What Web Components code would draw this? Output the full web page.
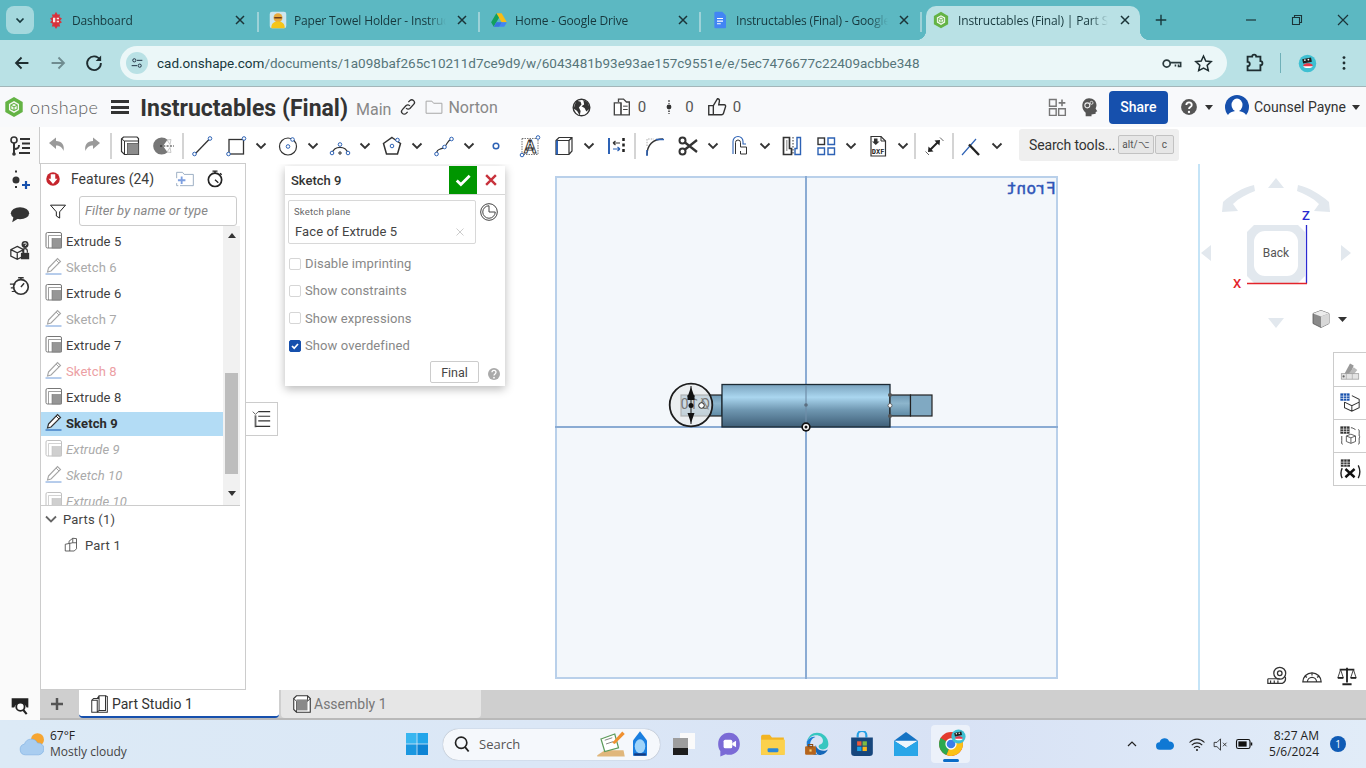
<!DOCTYPE html>
<html>
<head>
<meta charset="utf-8">
<title>Instructables (Final)</title>
<style>
  html, body { margin: 0; padding: 0; height: 768px; overflow: hidden; background: #fff; font-family: Roboto, "Liberation Sans", sans-serif; }
</style>
</head>
<body>
<app-shell></app-shell>
<script>
const BLUE = '#2d62b5';
const ring = (x, y, r = 1.8) => `<circle cx="${x}" cy="${y}" r="${r}" fill="#fff" stroke="${BLUE}" stroke-width="1"/>`;
const avatarFace = `<circle cx="12" cy="12" r="10" fill="#3fc0d2"/><path d="M6 7l10-2 1 5-10 2z" fill="#222"/><circle cx="9" cy="8" r="1" fill="#fff"/><circle cx="13" cy="7.5" r="1" fill="#fff"/><path d="M7 14c2-3 9-3 11 0 0 3-11 3-11 0z" fill="#e8384a"/><path d="M7 15h11c-1 3-10 3-11 0z" fill="#fff"/>`;

const ICONS = {
  // browser
  dashboard: `<path d="M12 1l2 3.500h3.500l-1 3.500 3.500 2-2.500 2.500L20 15l-3.500 2 1 3.500H14L12 24l-2-3.500H6.500l1-3.500L4 15l2.500-2.500L4 10l3.500-2-1-3.500H10z" fill="#d8323c"/><path d="M8 9h3v6H8zM13 9h3v2h-3zM13 13h3v2h-3z" fill="#fbe6e6"/>`,
  towel: `<rect x="1" y="1" width="22" height="22" rx="3" fill="#cfe6ee"/><circle cx="12" cy="9" r="6" fill="#e8a93c"/><path d="M7 8h10v2H7z" fill="#6b3d1c"/><path d="M3 23c0-7 4-9 9-9s9 2 9 9z" fill="#f5c518"/>`,
  drive: `<path d="M8.500 3h7l7 12h-7z" fill="#f9bc15"/><path d="M8.500 3L1.500 15l3.500 6 7-12z" fill="#12a05c"/><path d="M5 21h14l3.500-6h-14z" fill="#4285f4"/><path d="M15.500 15H8.500L5 21h7z" fill="#2b63c9" opacity=".5"/>`,
  docs: `<path d="M6 1h9l5 5v15.500a1.500 1.500 0 0 1-1.500 1.500h-12.500A1.500 1.500 0 0 1 4.500 21.500V2.500A1.500 1.500 0 0 1 6 1z" fill="#4285f4"/><path d="M8 10h8M8 13.500h8M8 17h5" stroke="#fff" stroke-width="1.600"/>`,
  hex: `<path d="M12 1l9.500 5.500v11L12 23l-9.500-5.500v-11z" fill="#64b345"/><path d="M12 5.500l5.500 3.200v6.600L12 18.500l-5.500-3.200V8.700z" fill="#f4f8f1"/><path d="M12 8l3.500 2v4L12 16l-3.500-2v-4zM12 12v4M8.500 10l3.500 2 3.500-2" fill="none" stroke="#64b345" stroke-width="1.100"/>`,
  back: `<path d="M19 12H6M11.500 6L5.500 12l6 6" fill="none" stroke="#1e2d30" stroke-width="2"/>`,
  forward: `<path d="M5 12h13M12.500 6l6 6-6 6" fill="none" stroke="#6f8c90" stroke-width="2"/>`,
  reload: `<path d="M18.500 8.500A7.500 7.500 0 1 0 19.500 12" fill="none" stroke="#1e2d30" stroke-width="2"/><path d="M19.800 3.800v6h-6z" fill="#1e2d30"/>`,
  tune: `<circle cx="8" cy="8" r="2.400" fill="none" stroke="#234" stroke-width="1.500"/><path d="M12 8h8M4 16h8" stroke="#234" stroke-width="1.500"/><circle cx="16" cy="16" r="2.400" fill="none" stroke="#234" stroke-width="1.500"/>`,
  key: `<circle cx="6.500" cy="12" r="4" fill="none" stroke="#2b3b3e" stroke-width="2"/><path d="M10.500 11h12v4.500h-2.500V13M16.500 13v2.500" fill="none" stroke="#2b3b3e" stroke-width="1.800"/>`,
  star: `<path d="M12 3.500l2.600 5.700 6.200.7-4.600 4.200 1.300 6.100L12 17.200l-5.500 3 1.300-6.100L3.200 9.900l6.200-.7z" fill="none" stroke="#1e2d30" stroke-width="1.700"/>`,
  puzzle: `<path d="M5 5h5a2.200 2.200 0 0 1 4.400 0H19v5a2.200 2.200 0 0 1 0 4.400V20H5v-4.500a2.400 2.400 0 0 0 0-4.800z" fill="none" stroke="#1e2d30" stroke-width="2"/>`,
  avatar: avatarFace,
  kebab: `<circle cx="12" cy="5.500" r="1.700" fill="#1e2d30"/><circle cx="12" cy="12" r="1.700" fill="#1e2d30"/><circle cx="12" cy="18.500" r="1.700" fill="#1e2d30"/>`,
  // doc bar
  link: `<path d="M9.500 13.500a3.500 3.500 0 0 0 5 .5l5-5.500a3.500 3.500 0 0 0-5-5l-2 2M14.500 10.500a3.500 3.500 0 0 0-5-.5l-5 5.500a3.500 3.500 0 0 0 5 5l2-2" fill="none" stroke="#333" stroke-width="1.800"/>`,
  folder: `<path d="M2.500 5h7l2 2.500h10V19.500H2.500z" fill="none" stroke="#a8a8a8" stroke-width="1.200"/>`,
  globe: `<circle cx="12" cy="12" r="9.500" fill="#fff" stroke="#333" stroke-width="1.600"/><path d="M6 4l5 1.500 1 3-3 3.500 2 4-1 5-3-5-4-3zM14 3l5 3 2.500 7-4 3.500-2-4-3.500-2 3-2z" fill="#333"/>`,
  copies: `<path d="M9 6V2.500h6l3.500 3.500H22v15.500H12M4 7h8v14.500H4z" fill="#fff" stroke="#444" stroke-width="1.600"/><path d="M12 7l0 14.500M14.500 11h5.500M14.500 15h5.500" stroke="#444" stroke-width="1.200"/>`,
  branchdot: `<circle cx="12" cy="12" r="3.200" fill="#333"/><path d="M12 3v4.500M12 16.500V21" stroke="#333" stroke-width="2" stroke-dasharray="2 1.500"/>`,
  thumb: `<path d="M8 10.500l4.500-7.500c2 0 2.500 1.500 2 3.500l-.6 3h6c1.200 0 1.800 1 1.400 2.200l-2.300 7.400c-.3.900-1 1.400-2 1.400H8zM8 10.500H3v10h5" fill="none" stroke="#333" stroke-width="1.500"/>`,
  grid4: `<path d="M3 3h8v8H3zM3 14h8v8H3zM14 14h8v8h-8z" fill="none" stroke="#777" stroke-width="1.700"/><path d="M18 3v8M14 7h8" stroke="#777" stroke-width="1.900"/>`,
  head: `<path d="M12 1.500c5.500 0 9 3.500 9 8.500 0 2-1 3-1 4l2 3-2 1v2l-5 1V23H8v-4c-2-2-4-4-4-8.500C4 5.500 7.500 1.500 12 1.500z" fill="#555"/><circle cx="10" cy="10" r="3" fill="none" stroke="#eee" stroke-width="1.300"/><circle cx="15" cy="7" r="1.800" fill="none" stroke="#eee" stroke-width="1"/>`,
  help: `<circle cx="12" cy="12" r="9.500" fill="#555"/><path d="M8.800 9.500c0-4.200 6.500-4.200 6.500 0 0 2.700-3.300 2.500-3.300 5" fill="none" stroke="#fff" stroke-width="2.200"/><circle cx="12" cy="18" r="1.400" fill="#fff"/>`,
  user: `<circle cx="12" cy="12" r="12" fill="#1650ad"/><ellipse cx="12" cy="10" rx="5.500" ry="6.500" fill="#fff"/><path d="M2 24c0-6 5-8 10-8s10 2 10 8z" fill="#fff"/>`,
  // toolbar
  tree: `<circle cx="6" cy="6" r="3" fill="none" stroke="#333" stroke-width="1.600"/><path d="M6 9v11M6 15c4 0 5-1 5-4" fill="none" stroke="#333" stroke-width="2"/><circle cx="6" cy="20" r="1.800" fill="#333"/><path d="M12 5h10M14 9.500h8M14 14h8M11 19h11" stroke="#333" stroke-width="2"/>`,
  undo: `<path d="M4 9l7-5.500V7c5.500 0 9 4 7.500 10-1.500-4-4-5.500-7.500-5.500V15z" fill="#9a9a9a"/>`,
  redo: `<path d="M20 9l-7-5.500V7C7.500 7 4 11 5.500 17c1.500-4 4-5.500 7.500-5.500V15z" fill="#9a9a9a"/>`,
  extrude: `<path d="M3.500 5l2-2H19l1.500 1.500v16H6.500l-3-3z" fill="#fff" stroke="#333" stroke-width="1.200"/><path d="M6.500 7v13.500M3.500 5l3 2h14" fill="none" stroke="#333" stroke-width="1"/><rect x="9.500" y="9.500" width="11" height="11" fill="#8c8c8c" stroke="#555" stroke-width=".8"/>`,
  revolve: `<path d="M15.500 5.800A8.500 8.500 0 1 0 15.500 18.200L11 12z" fill="#777"/><path d="M15 6l4-.5-1 5zM15 18l4 .5-1-5z" fill="none" stroke="#bbb" stroke-width=".8"/><path d="M8 12h14" stroke="#222" stroke-width="1" stroke-dasharray="2 1.300"/>`,
  line: `<path d="M5.500 19.500L19 5.500" stroke="#333" stroke-width="1.300"/>${ring(4.5, 20)}${ring(20, 4.5)}`,
  rect: `<rect x="5" y="5.500" width="14.500" height="14.500" fill="none" stroke="#333" stroke-width="1.300"/>${ring(20, 4.5)}${ring(4.5, 20)}`,
  circle: `<circle cx="12" cy="12.500" r="8.500" fill="none" stroke="#333" stroke-width="1.200"/>${ring(12, 12.5)}${ring(16.5, 5.5)}`,
  arc: `<path d="M4 19A8.500 8.500 0 0 1 20 19" fill="none" stroke="#333" stroke-width="1.200"/>${ring(4, 19)}${ring(20, 19)}${ring(12, 10.5)}<path d="M12 17v4M10 19h4" stroke="#333" stroke-width="1"/>`,
  polygon: `<path d="M12 3.500l8.500 6-3 10.500h-11L3.500 9.500z" fill="none" stroke="#333" stroke-width="1.500"/>${ring(12, 12)}${ring(17.5, 6)}`,
  spline: `<path d="M4.500 20c0-6 5-4 8-7s2.500-6 7-8" fill="none" stroke="#333" stroke-width="1.200"/>${ring(4.5, 20)}${ring(12.5, 13)}${ring(19.5, 5)}`,
  point: `<circle cx="12" cy="12" r="2.800" fill="#fff" stroke="${BLUE}" stroke-width="1.500"/>`,
  textTool: `<rect x="4" y="4.500" width="16" height="16" fill="none" stroke="#555" stroke-width=".8" stroke-dasharray="1.500 1"/><text x="12" y="19" text-anchor="middle" font-family="Roboto, sans-serif" font-size="18" font-weight="700" fill="#fff" stroke="#333" stroke-width=".9">A</text>${ring(20, 3.5)}${ring(4, 21)}`,
  plane: `<path d="M4 6.500l3-3h13V17l-3 3.500H4zM4 6.500h13v14M17 6.500l3-3" fill="none" stroke="#333" stroke-width="1.200"/><rect x="4" y="6.500" width="2" height="14" fill="${BLUE}"/>`,
  dim: `<path d="M5 4v16" stroke="${BLUE}" stroke-width="2"/><path d="M19.500 4v16" stroke="#222" stroke-width="2.500" stroke-dasharray="3 2.500"/><path d="M9 9h7M9 9l2.500-2M9 9l2.500 2" fill="none" stroke="#333" stroke-width="1.200"/><path d="M9 15h7M16 15l-2.500-2M16 15l-2.500 2" fill="none" stroke="${BLUE}" stroke-width="1.200"/>`,
  fillet: `<path d="M5 21C5 11 11 5 21 5" fill="none" stroke="#333" stroke-width="1.500"/><path d="M5 16v6M14 5.500h8" stroke="${BLUE}" stroke-width="1.500"/><path d="M5 12V5h7" fill="none" stroke="#aaa" stroke-width="1" stroke-dasharray="1.500 1.200"/>`,
  scissors: `<circle cx="6.500" cy="6.500" r="3" fill="none" stroke="#333" stroke-width="2"/><circle cx="6.500" cy="17.500" r="3" fill="none" stroke="#333" stroke-width="2"/><path d="M9 8.500L21 18M9 15.500L21 6" stroke="#333" stroke-width="2.300"/>`,
  offset: `<path d="M7.500 20V8.500a2.500 2.500 0 0 1 5 0V13h6v7h-6v-3" fill="none" stroke="#333" stroke-width="1"/><path d="M5 20V7.500a5 5 0 0 1 10 0V10h3" fill="none" stroke="${BLUE}" stroke-width="1.100"/>`,
  mirror: `<path d="M3.500 3.500h6v11h2v6h-8z" fill="#fff" stroke="#333" stroke-width="1.700"/><rect x="6" y="6" width="1.500" height="11" fill="#aaa"/><path d="M20.500 3.500v17h-5.500v-6h2v-11z" fill="none" stroke="${BLUE}" stroke-width="1.400"/><path d="M13 3v18" stroke="#333" stroke-width="1" stroke-dasharray="1.500 1.500"/>`,
  pattern: `<rect x="4" y="4" width="6.500" height="6.500" fill="none" stroke="#333" stroke-width="1.400"/><path d="M14 4h6.500v6.500H14zM4 14h6.500v6.500H4zM14 14h6.500v6.500H14z" fill="none" stroke="${BLUE}" stroke-width="1.400"/>`,
  dxf: `<path d="M5 2.500h10l4.500 4.500v15H5z" fill="#fff" stroke="#333" stroke-width="1.200"/><path d="M15 2.500V7h4.500" fill="none" stroke="#333" stroke-width="1"/><path d="M8 4.500h3.500v3h2L9.800 11 6 7.500h2z" fill="#333"/><text x="12.200" y="19.500" text-anchor="middle" font-family="'DejaVu Sans Mono', monospace" font-size="7" font-weight="700" fill="#222">DXF</text>`,
  transform: `<path d="M7.500 16.500L16 8" stroke="#222" stroke-width="2"/><path d="M12.500 6.500l5.500-.5-.5 5.500zM6.500 12.500L6 18l5.500-.5z" fill="#222"/><path d="M18 3.500l3.500 3.500M3.500 17.500L7 21" stroke="#555" stroke-width=".9"/>`,
  tangent: `<path d="M2 21L16 5" stroke="${BLUE}" stroke-width="1.200"/><path d="M9 10.500l10 10.500" stroke="#222" stroke-width="2.400"/>`,
  // left rail
  railAdd: `<path d="M8 2.500v3.500M8 18v3.500" stroke="#333" stroke-width="2" stroke-dasharray="2 1.500"/><circle cx="8" cy="12" r="3.500" fill="#333"/><path d="M18 13v8M14 17h8" stroke="#1650ad" stroke-width="2.200"/>`,
  comment: `<ellipse cx="12" cy="10" rx="10" ry="6.500" fill="#333"/><path d="M5 14l-1.500 6 7-4.500z" fill="#333"/>`,
  access: `<path d="M9 9l7 3.500v7L9 23l-7-3.500v-7zM2 12.500L9 16l7-3.500M9 16v7" fill="none" stroke="#333" stroke-width="1.400" transform="translate(0 -2)"/><rect x="13" y="14" width="9" height="7" fill="#333"/><path d="M15 14v-2a2.500 2.500 0 0 1 5 0v2" fill="none" stroke="#333" stroke-width="1.300"/><circle cx="17.500" cy="5" r="3.800" fill="#333"/><path d="M16 4.500c0-1.800 3-1.800 3 0 0 1-1.500 1-1.500 2" fill="none" stroke="#fff" stroke-width="1"/>`,
  perf: `<circle cx="13" cy="13" r="8" fill="#fff" stroke="#333" stroke-width="1.800"/><path d="M10 3h6M13 3v2M13 13l3.500-4" fill="none" stroke="#333" stroke-width="1.600"/><path d="M1 10h6M2 14h4M3 18h4" stroke="#333" stroke-width="1.300"/>`,
  inspect: `<path d="M2 4h20v11h-2a8 8 0 0 0-15 0H2z" fill="#222"/><circle cx="12.500" cy="14" r="5" fill="#fff" stroke="#222" stroke-width="2.200"/><path d="M16 18l4 5" stroke="#222" stroke-width="2.500"/>`,
  // feature panel
  rollback: `<circle cx="12" cy="12" r="9" fill="#c6252d"/><path d="M9 5.500h6v6h3l-6 7-6-7h3z" fill="#fff"/>`,
  folderAdd: `<path d="M2 4h7l2 2.500h11V20H6" fill="none" stroke="#8aa0b8" stroke-width="1"/><path d="M2 4v7M2 17v3h2" fill="none" stroke="#8aa0b8" stroke-width="1"/><path d="M8 9v9M3.500 13.500h9" stroke="#7d9fe0" stroke-width="2.200"/>`,
  stopwatch: `<circle cx="12" cy="13" r="8" fill="#fff" stroke="#222" stroke-width="2"/><path d="M9 2.500h6M12 2.500v2.500M12 13l4 3.500M18 5l2 2" fill="none" stroke="#222" stroke-width="1.600"/>`,
  funnel: `<path d="M3 5h18l-7 8v7.500l-4-2.500v-5z" fill="#fff" stroke="#222" stroke-width="1.200"/>`,
  extrudeRow: `<rect x="3" y="3.500" width="15.500" height="15.500" rx="1.500" fill="#fff" stroke="#777" stroke-width="1"/><path d="M5.500 6.500V19M5.500 6.500h13" fill="none" stroke="#777" stroke-width=".7"/><rect x="9" y="9.500" width="9.500" height="9.500" fill="#969696" stroke="#777" stroke-width=".6"/>`,
  extrudeOff: `<g opacity=".45"><rect x="3" y="3.500" width="15.500" height="15.500" rx="1.500" fill="#fff" stroke="#777" stroke-width="1"/><path d="M5.500 6.500V19M5.500 6.500h13" fill="none" stroke="#777" stroke-width=".7"/><rect x="9" y="9.500" width="9.500" height="9.500" fill="#969696" stroke="#777" stroke-width=".6"/></g>`,
  sketchRow: `<path d="M2.500 19h16" stroke="#6f9ad8" stroke-width="1"/><path d="M5.500 13L14.500 3.500l3 3-9.500 9.500-3.500 1z" fill="#fff" stroke="#a5a5a5" stroke-width="1.100"/><path d="M13 5l3 3" stroke="#a5a5a5" stroke-width="1"/>`,
  sketchOn: `<path d="M2.500 19h16" stroke="#1b5fb5" stroke-width="1.100"/><path d="M5.500 13L14.500 3.500l3 3-9.500 9.500-3.500 1z" fill="#fff" stroke="#333" stroke-width="1.200"/><path d="M13 5l3 3" stroke="#333" stroke-width="1"/>`,
  part: `<path d="M3 11l5-1V7l5-4 5 .5V17l-3 3H3zM13 3v6l-5 1M13 9h5M9 10v10" fill="none" stroke="#444" stroke-width="1.100"/>`,
  list: `<path d="M3 4l3 3 3-3" fill="none" stroke="#555" stroke-width="1"/><path d="M6 8v13" stroke="#666" stroke-width="2"/><path d="M9 4h13M9 9h13M9 14h13M6 20h16" stroke="#333" stroke-width="1.300"/>`,
  // dialog
  check: `<path d="M4.500 12.500l5 5L20 7" fill="none" stroke="#fff" stroke-width="3.300"/>`,
  cross: `<path d="M5.500 5.500l13 13M18.500 5.500l-13 13" stroke="#c8323c" stroke-width="3.200"/>`,
  clock: `<circle cx="12" cy="12" r="10" fill="none" stroke="#444" stroke-width="1.200"/><path d="M12 4.500a7.500 7.500 0 1 0 7.500 7.500H12z" fill="none" stroke="#444" stroke-width="1.200"/>`,
  helpGray: `<circle cx="12" cy="12" r="9" fill="#aaa"/><path d="M9 9.500c0-4 6-4 6 0 0 2.500-3 2.300-3 4.800" fill="none" stroke="#fff" stroke-width="2"/><circle cx="12" cy="17.500" r="1.300" fill="#fff"/>`,
  // view side buttons
  appearance: `<path d="M5 18l7-13 4 2-4 11z" fill="#999"/><path d="M9 18l7-9 4 3-5 6z" fill="#bbb"/><rect x="2.500" y="16" width="19" height="6" fill="#e4e4e4" stroke="#999" stroke-width=".8"/><path d="M8 16v6M14.500 16v6" stroke="#aaa" stroke-width=".8"/><circle cx="5" cy="19" r="1.200" fill="#666"/>`,
  tableBlue: `<rect x="1.500" y="1.500" width="10" height="8" fill="#1650ad"/><path d="M1.500 4.500h10M1.500 7h10M5 1.500v8M8.300 1.500v8" stroke="#fff" stroke-width=".7"/><path d="M14 5l8 4v9l-8 4-8-4v-6M6 12l8 4 8-4M14 16v6" fill="none" stroke="#333" stroke-width="1.100" transform="translate(0 -1)"/>`,
  tableCfg: `<rect x="1.500" y="1.500" width="10" height="8" fill="#333"/><path d="M1.500 4.500h10M1.500 7h10M5 1.500v8M8.300 1.500v8" stroke="#fff" stroke-width=".7"/><path d="M13 3c2 0 2 .5 5 2M21 5c1.500 0 1 2 1 4v3l1 1-1 1v3c0 2 .5 4-1 4M3 12v5c0 2-.5 4 1 4" fill="none" stroke="#444" stroke-width="1"/><path d="M8 12l5-2 5 2v6l-5 2-5-2zM13 14v6M8 12l5 2 5-2" fill="none" stroke="#555" stroke-width="1"/>`,
  tableFx: `<rect x="2" y="1.500" width="10" height="8" fill="#333"/><path d="M2 4.500h10M2 7h10M5.300 1.500v8M8.700 1.500v8" stroke="#fff" stroke-width=".7"/><path d="M3.500 11c-1.500 3-1.500 8 0 11M21 8c2 4 2 10 0 14" fill="none" stroke="#222" stroke-width="1.500"/><path d="M7 12l10 9M17 12L7 21" stroke="#111" stroke-width="2.600"/>`,
  tape: `<circle cx="15" cy="9" r="6.500" fill="#fff" stroke="#333" stroke-width="1.400"/><circle cx="15" cy="9" r="2.500" fill="none" stroke="#333" stroke-width="1.400"/><path d="M2 15h13M2 15v5h16a6 6 0 0 0 3-7M5 17v3M9 17v3M13 17v3" fill="none" stroke="#333" stroke-width="1.300"/>`,
  protractor: `<path d="M2 18.500a10 10 0 0 1 20 0z" fill="#fff" stroke="#333" stroke-width="1.400"/><path d="M7 18.500a5 5 0 0 1 10 0M4 12l2.500 1.500M20 12l-2.500 1.500M12 8.500v3" fill="none" stroke="#333" stroke-width="1.300"/>`,
  scale: `<path d="M12 3v16M4 5h16M7 21h10" stroke="#222" stroke-width="2"/><path d="M2 14l3-9 3 9zM16 14l3-9 3 9z" fill="none" stroke="#333" stroke-width="1"/><path d="M2 14h6M16 14h6" stroke="#222" stroke-width="2"/>`,
  // tabs
  studioTab: `<path d="M3 8h6v13H3zM3 8l2-2h6M9 21l2-2M11 3h7v16h-7zM11 3l-2 3M11 6v13" fill="none" stroke="#333" stroke-width="1.100"/><path d="M18 3l2 1v17h-9l-2 0" fill="none" stroke="#333" stroke-width="1.100"/>`,
  assemblyTab: `<path d="M3 6l3-3h12l3 3v15H6l-3-3z" fill="#fff" stroke="#333" stroke-width="1.200"/><path d="M3 6l3 3h12V3M6 9v12M18 9l3-3" fill="none" stroke="#333" stroke-width="1"/><rect x="6" y="7" width="12" height="12" fill="#8a8a8a"/>`,
  plus: `<path d="M12 4v16M4 12h16" stroke="#555" stroke-width="3.300"/>`,
  plusDark: `<path d="M12 3v18M3 12h18" stroke="#17383d" stroke-width="2.400"/>`,
  // taskbar
  weather: `<circle cx="18" cy="8" r="6" fill="#f6a531"/><path d="M7 22a5 5 0 0 1-1-9.900A6.500 6.500 0 0 1 18 11a5.500 5.500 0 0 1 1 11z" fill="#a9cdf0" stroke="#7fb0e2" stroke-width=".6"/>`,
  win: `<path d="M1 1h10.600v10.600H1z" fill="#38b6f0"/><path d="M12.400 1H23v10.600H12.400z" fill="#22a5ea"/><path d="M1 12.400h10.600V23H1z" fill="#1a97e0"/><path d="M12.400 12.400H23V23H12.400z" fill="#0d83d4"/>`,
  search: `<circle cx="11" cy="10.500" r="6.800" fill="none" stroke="#222" stroke-width="2"/><path d="M15.500 15.500l4.500 5.500" stroke="#222" stroke-width="2.200"/>`,
  taskview: `<rect x="8" y="1" width="15" height="16" fill="#fafafa"/><rect x="1" y="6" width="15" height="10" fill="#9d9d9d"/><rect x="1" y="16" width="15" height="7" fill="#1d1d1d"/>`,
  meet: `<path d="M12 1.500c6 0 10 4.500 10 10.500S18 22 12 22c-1 0-2 0-3-.5L4 23.500v-5C2.500 16.500 2 14.500 2 12 2 6 6 1.500 12 1.500z" fill="#7b6bd6"/><rect x="7" y="8" width="8" height="8" rx="1.500" fill="#fff"/><path d="M15 11l3.500-2v6L15 13z" fill="#fff"/>`,
  explorer: `<path d="M1 5a1.500 1.500 0 0 1 1.500-1.500H9L11 6h11v16H1z" fill="#f2b423"/><path d="M1 8h22v14H1z" fill="#fcd14d"/><rect x="7" y="16" width="10" height="3.500" rx="1" fill="#2b88d8"/>`,
  edge: `<path d="M12 1.500C18 1.500 22.500 6 22.500 12c0 3-2 5-5 5-2 0-4-1-4-2.500 0-3 4-1.500 4-5.500 0-3-3-5-6-5-4 0-7 2.500-9 6C4 4.500 7.500 1.500 12 1.500z" fill="#37c6c0"/><path d="M2.500 10c2-3.500 5-5 8-4.500C6.500 7 5 10.500 6 15c.8 3.500 3.500 6 7 7-6 1-11-3.500-10.500-12z" fill="#1f7fd6"/><path d="M13 22c4 .5 7.500-1.500 9-5-2 1.500-5 1.500-7.500.5-2-1-3.500-2.500-3.500-4.500-1.500 4 .5 8 2 9z" fill="#1567b8"/><rect x="1" y="14" width="10" height="8" rx="1" fill="#b5651d"/><rect x="4" y="12.500" width="4" height="2" fill="none" stroke="#8a4a12"/><rect x="5" y="17" width="2" height="2" fill="#f5d27a"/>`,
  store: `<path d="M8 6V4a4 4 0 0 1 8 0v2" fill="none" stroke="#24a0e6" stroke-width="2"/><path d="M2 6h20v14a3 3 0 0 1-3 3H5a3 3 0 0 1-3-3z" fill="#17467c"/><rect x="7.500" y="9.500" width="4" height="4" fill="#ee5a3a"/><rect x="12.500" y="9.500" width="4" height="4" fill="#7dbb42"/><rect x="7.500" y="14.500" width="4" height="4" fill="#1aa3ea"/><rect x="12.500" y="14.500" width="4" height="4" fill="#fab81b"/>`,
  mail: `<path d="M1 9l11-8 11 8v14H1z" fill="#1573c4"/><path d="M1 9h22L12 16z" fill="#eef6fc"/><path d="M1 9l11 7 11-7v14H1z" fill="#29a6e8"/>`,
  chrome: `<circle cx="12" cy="12" r="11" fill="#e33b2e"/><path d="M12 12L2.400 6.500a11 11 0 0 0 5.500 15.700z" fill="#2da94f"/><path d="M12 12l-4.100 10.200A11 11 0 0 0 22.800 10L12 7z" fill="#fbc116"/><path d="M7 7h16v3H12z" fill="#e33b2e"/><circle cx="12" cy="12" r="5.200" fill="#fff"/><circle cx="12" cy="12" r="4" fill="#3b7de8"/>`,
  chevUp: `<path d="M6 15l6-6 6 6" fill="none" stroke="#222" stroke-width="1.800"/>`,
  cloud: `<path d="M6 19a4.500 4.500 0 0 1-.5-9A6 6 0 0 1 17 9a5 5 0 0 1 1.500 10z" fill="#0f78d4"/>`,
  wifi: `<path d="M2 10c6-6 14-6 20 0M5 13.500c4-4 10-4 14 0M8 17c2.500-2.300 5.500-2.300 8 0" fill="none" stroke="#222" stroke-width="1.400"/><circle cx="12" cy="20" r="1.400" fill="#222"/>`,
  volume: `<path d="M3 9h4l5-5v16l-5-5H3z" fill="none" stroke="#222" stroke-width="1.200"/><path d="M15.500 9.500l5 5M20.500 9.500l-5 5" stroke="#222" stroke-width="1.200"/>`,
  battery: `<rect x="2" y="6" width="18" height="12" rx="2.500" fill="none" stroke="#111" stroke-width="1.500"/><rect x="4.500" y="8.500" width="11" height="7" fill="#111"/><rect x="21" y="10" width="2" height="4" fill="#111"/>`,
  pencilBook: `<path d="M1 21l6-4h15l1 5H1z" fill="#e0b77c"/><path d="M4 8l11-4 3 11-11 3z" fill="#fff" stroke="#5c9a5a" stroke-width="1"/><path d="M7 9l6-2M8 12l6-2" stroke="#888" stroke-width=".8"/><path d="M13 11l8-9 2 2-8 8z" fill="#f09030"/>`,
  pencilBlue: `<path d="M12 1l6 8v13H6V9z" fill="#1a7fe0"/><ellipse cx="12" cy="14" rx="4.500" ry="6" fill="#9fd4fa"/><rect x="7" y="20" width="10" height="2" fill="#123a80"/>`
};

class XIcon extends HTMLElement {
  constructor() {
    super();
    const size = this.getAttribute('size') || 24;
    this.attachShadow({ mode: 'open' }).innerHTML = `
      <style>:host { display: inline-flex; flex: none; width: ${size}px; height: ${size}px; } svg { display: block; }</style>
      <svg width="${size}" height="${size}" viewBox="0 0 24 24">${ICONS[this.getAttribute('name')] || ''}</svg>`;
  }
}
customElements.define('x-icon', XIcon);

class ChromeTab extends HTMLElement {
  constructor() {
    super();
    const active = this.hasAttribute('active');
    const pad = this.getAttribute('pad') || (active ? 6 : 10);
    this.attachShadow({ mode: 'open' }).innerHTML = `
      <style>
        :host { display: block; flex: none; width: 221px; height: 34px; position: relative; color: #17383d; }
        .in { display: flex; align-items: center; height: 34px; padding: 0 0 6px ${pad}px; border-radius: 10px 10px 0 0; background: ${active ? '#b9e1e5' : 'transparent'}; box-sizing: border-box; width: ${active ? 214 : 221}px; margin-left: ${active ? 4 : 0}px; position: relative; }
        .title { font: 12px "Open Sans", sans-serif; letter-spacing: -.15px; margin-left: ${active ? 8 : 7}px; width: ${active ? 150 : 152}px; white-space: nowrap; overflow: hidden;
                 -webkit-mask-image: linear-gradient(90deg, #000 ${active ? 132 : 134}px, transparent ${active ? 150 : 152}px); }
        .x { font-size: 0; margin-left: ${active ? 11 : 10}px; }
        .x svg { display: block; }
        .sep { position: absolute; right: 0; top: 6px; width: 2px; height: 20px; background: #9dd2d8; display: ${this.hasAttribute('nosep') ? 'none' : 'block'}; }
        .flare { display: ${active ? 'block' : 'none'}; position: absolute; bottom: 0; width: 10px; height: 10px; }
        .l { left: -10px; background: radial-gradient(circle at 0 0, transparent 10px, #b9e1e5 10.500px); }
        .r { right: -10px; background: radial-gradient(circle at 100% 0, transparent 10px, #b9e1e5 10.500px); }
      </style>
      <div class="in">
        <span class="flare l"></span>
        <x-icon name="${this.getAttribute('icon')}" size="18"></x-icon>
        <span class="title"><slot></slot></span>
        <span class="x"><svg width="12" height="12" viewBox="0 0 12 12"><path d="M2 2l8 8M10 2l-8 8" stroke="#1b3438" stroke-width="1.500"/></svg></span>
        <span class="flare r"></span>
      </div>
      <div class="sep"></div>`;
  }
}
customElements.define('chrome-tab', ChromeTab);

class TabStrip extends HTMLElement {
  constructor() {
    super();
    this.attachShadow({ mode: 'open' }).innerHTML = `
      <style>
        :host { display: flex; height: 40px; background: #5cb8c2; box-sizing: border-box; padding-top: 6px; flex: none; }
        .menu { width: 28px; height: 28px; margin-left: 6px; margin-right: 4px; border-radius: 8px; background: #a4d8dd; display: flex; align-items: center; justify-content: center; flex: none; }
        .tabs { display: flex; }
        .win { margin-left: auto; display: flex; margin-top: -6px; align-items: center; height: 40px; }
        .win svg { display: block; }
        .win span { width: 46px; display: flex; justify-content: center; }
      </style>
      <div class="menu"><svg width="12" height="12" viewBox="0 0 12 12"><path d="M2.500 4.500L6 8l3.500-3.500" fill="none" stroke="#17383d" stroke-width="1.700"/></svg></div>
      <div class="tabs"><slot></slot></div>
      <x-icon name="plusDark" size="14" style="margin:7px 0 0 11px"></x-icon>
      <div class="win">
        <span><svg width="12" height="12"><path d="M1 6h10" stroke="#1b3438" stroke-width="1.200"/></svg></span>
        <span><svg width="12" height="12"><path d="M1.500 3.500h7v7h-7zM3.500 3.500v-2h7v7h-2" fill="none" stroke="#1b3438" stroke-width="1.100"/></svg></span>
        <span><svg width="12" height="12"><path d="M1 1l10 10M11 1L1 11" stroke="#1b3438" stroke-width="1.200"/></svg></span>
      </div>`;
  }
}
customElements.define('tab-strip', TabStrip);

class AddressBar extends HTMLElement {
  constructor() {
    super();
    this.attachShadow({ mode: 'open' }).innerHTML = `
      <style>
        :host { display: flex; align-items: center; height: 47px; flex: none; box-sizing: border-box; background: #b9e1e5; border-bottom: 1px solid #a3b6b9; padding: 0 0 0 11px; }
        .nav { display: flex; gap: 14px; }
        .url { width: 1107px; height: 34px; margin-left: 15px; border-radius: 17px; background: #ebf7f8; display: flex; align-items: center; box-sizing: border-box; padding-left: 6px; flex: none; }
        .tune { width: 22px; height: 22px; border-radius: 50%; background: #b9e1e5; display: flex; align-items: center; justify-content: center; }
        .text { font: 13.500px/34px Roboto, sans-serif; color: #56757a; margin-left: 9px; white-space: nowrap; }
        .text b { font-weight: 400; color: #17383d; }
        .end { margin-left: auto; display: flex; gap: 11px; padding-right: 13px; }
        .right { display: flex; align-items: center; margin-left: 16px; }
        .div { width: 1px; height: 20px; background: #6fb0b8; margin: 0 16px 0 15px; }
      </style>
      <div class="nav"><x-icon name="back" size="22"></x-icon><x-icon name="forward" size="22"></x-icon><x-icon name="reload" size="22"></x-icon></div>
      <div class="url">
        <span class="tune"><x-icon name="tune" size="16"></x-icon></span>
        <span class="text"><b>cad.onshape.com</b>/documents/1a098baf265c10211d7ce9d9/w/6043481b93e93ae157c9551e/e/5ec7476677c22409acbbe348</span>
        <span class="end"><x-icon name="key" size="21"></x-icon><x-icon name="star" size="21"></x-icon></span>
      </div>
      <div class="right">
        <x-icon name="puzzle" size="22"></x-icon>
        <span class="div"></span>
        <x-icon name="avatar" size="21"></x-icon>
        <x-icon name="kebab" size="20" style="margin-left:16px"></x-icon>
      </div>`;
  }
}
customElements.define('address-bar', AddressBar);

class DocBar extends HTMLElement {
  constructor() {
    super();
    this.attachShadow({ mode: 'open' }).innerHTML = `
      <style>
        :host { display: flex; align-items: center; height: 40px; flex: none; background: #f8f9fb; color: #333; box-sizing: border-box; padding-left: 3px; font-family: Roboto, sans-serif; }
        .brand { font: 300 18px Lato, sans-serif; color: #5f5f5f; margin-left: 5px; letter-spacing: .4px; }
        .burger { width: 18px; height: 14px; margin-left: 13px; border-top: 3px solid #333; border-bottom: 3px solid #333; position: relative; box-sizing: border-box; }
        .burger::after { content: ""; position: absolute; left: 0; right: 0; top: 2.500px; height: 3px; background: #333; }
        h1 { font: 700 23px Roboto, sans-serif; margin: 2px 0 0 11px; color: #333; }
        .main { font-size: 16px; color: #888; margin: 4px 0 0 8px; }
        .count { font-size: 15px; color: #555; }
        .mid { display: flex; align-items: center; }
        .right { margin-left: auto; display: flex; align-items: center; }
        .share { width: 59px; height: 33px; background: #1650ad; color: #fff; font: 500 14px Roboto, sans-serif; border-radius: 4px; display: flex; align-items: center; justify-content: center; margin: 0 11px 0 10px; }
        .caret { width: 0; height: 0; border: 4.500px solid transparent; border-top: 5px solid #333; border-bottom: 0; }
        .name { font-size: 14px; color: #333; margin: 0 6px 0 5px; }
      </style>
      <x-icon name="hex" size="22"></x-icon>
      <span class="brand">onshape</span>
      <span class="burger"></span>
      <h1>Instructables (Final)</h1>
      <span class="main">Main</span>
      <x-icon name="link" size="18" style="margin:0 0 0 8px"></x-icon>
      <x-icon name="folder" size="20" style="margin-left:7px"></x-icon>
      <span class="main" style="margin:0 0 0 4px">Norton</span>
      <div class="mid" style="margin-left:73px">
        <x-icon name="globe" size="21"></x-icon>
        <x-icon name="copies" size="20" style="margin-left:19px"></x-icon>
        <span class="count" style="margin-left:7px">0</span>
        <x-icon name="branchdot" size="18" style="margin-left:14px"></x-icon>
        <span class="count" style="margin-left:7px">0</span>
        <x-icon name="thumb" size="22" style="margin-left:12px"></x-icon>
        <span class="count" style="margin-left:5px">0</span>
      </div>
      <div class="right">
        <x-icon name="grid4" size="20"></x-icon>
        <x-icon name="head" size="20" style="margin-left:12px"></x-icon>
        <span class="share">Share</span>
        <x-icon name="help" size="20"></x-icon>
        <span class="caret" style="margin:0 12px 0 6px"></span>
        <x-icon name="user" size="24"></x-icon>
        <span class="name">Counsel Payne</span>
        <span class="caret" style="margin-right:6px"></span>
      </div>`;
  }
}
customElements.define('doc-bar', DocBar);

class ToolBar extends HTMLElement {
  constructor() {
    super();
    const t = (n) => `<span class="t"><x-icon name="${n}" size="24"></x-icon></span>`;
    const c = `<span class="c"><svg width="12" height="12" viewBox="0 0 12 12"><path d="M1.500 3.500L6 8l4.500-4.500" fill="none" stroke="#333" stroke-width="1.800"/></svg></span>`;
    const s = `<span class="s"></span>`;
    this.attachShadow({ mode: 'open' }).innerHTML = `
      <style>
        :host { display: flex; align-items: center; height: 37px; flex: none; background: #fff; position: relative; }
        .rail { width: 40px; height: 37px; box-sizing: border-box; border-right: 1px solid #ccc; background: #fafafa; display: flex; align-items: center; justify-content: center; flex: none; }
        .t { width: 34px; height: 30px; flex: none; display: flex; align-items: center; justify-content: center; }
        .c { width: 18px; height: 30px; flex: none; margin: 0 1px 0 -1px; display: flex; align-items: center; justify-content: center; }
        .s { width: 2px; height: 26px; flex: none; margin: 0 1px; background: #d4d4d4; }
        .search { margin: -2px 0 0 12px; width: 160px; height: 32px; background: #efefef; border-radius: 3px; display: flex; align-items: center; box-sizing: border-box; padding-left: 10px; font: 14px Roboto, sans-serif; letter-spacing: -.15px; color: #333; white-space: nowrap; flex: none; }
        .k { font: 10px Roboto, sans-serif; letter-spacing: 0; color: #555; border: 1px solid #c2c2c2; background: #e6e6e6; height: 19px; line-height: 18px; box-sizing: border-box; padding: 0 3px; border-radius: 2px; }
      </style>
      <div class="rail"><x-icon name="tree" size="24"></x-icon></div>
      ${t('undo')}<span style="width:1px;flex:none"></span>${t('redo')}${s}${t('extrude')}${t('revolve')}${s}
      ${t('line')}${t('rect')}${c}${t('circle')}${c}${t('arc')}${c}${t('polygon')}${c}${t('spline')}${c}${t('point')}${t('textTool')}${t('plane')}${c}${t('dim')}${s}
      ${t('fillet')}${t('scissors')}${c}${t('offset')}${c}${t('mirror')}${t('pattern')}${c}${t('dxf')}${c}${s}${t('transform')}${s}${t('tangent')}${c}
      <div class="search">Search tools...<span class="k" style="margin-left:3px">alt/⌥</span><span class="k" style="margin-left:1px;padding:0 6px">c</span></div>`;
  }
}
customElements.define('tool-bar', ToolBar);

class LeftRail extends HTMLElement {
  constructor() {
    super();
    this.attachShadow({ mode: 'open' }).innerHTML = `
      <style>
        :host { display: flex; flex-direction: column; align-items: center; width: 40px; flex: none; background: #fafafa; padding-top: 4px; box-sizing: border-box; gap: 12px; }
      </style>
      <x-icon name="railAdd" size="24"></x-icon>
      <x-icon name="comment" size="22"></x-icon>
      <x-icon name="access" size="22" style="margin-top:2px"></x-icon>
      <x-icon name="perf" size="22" style="margin-top:1px"></x-icon>`;
  }
}
customElements.define('left-rail', LeftRail);

class FeatureRow extends HTMLElement {
  constructor() {
    super();
    const kind = this.getAttribute('kind');
    const state = this.getAttribute('state') || '';
    const icon = kind === 'extrude'
      ? (state === 'off' ? 'extrudeOff' : 'extrudeRow')
      : (state === 'sel' ? 'sketchOn' : 'sketchRow');
    const styles = {
      '': 'color:#3f3f3f',
      dim: 'color:#aaa',
      err: 'color:#eca0a4',
      sel: 'color:#2b2b2b;font-weight:700;background:#b3dcf5',
      off: 'color:#aaa;font-style:italic'
    };
    this.attachShadow({ mode: 'open' }).innerHTML = `
      <style>
        :host { display: block; margin-bottom: 2px; }
        div { height: 24px; box-sizing: border-box; padding: 0 0 2px 2px; display: flex; align-items: center; font: 13px Roboto, sans-serif; white-space: nowrap; letter-spacing: .1px; }
        span { margin-left: -1px; }
      </style>
      <div style="${styles[state]}"><x-icon name="${icon}" size="24"></x-icon><span><slot></slot></span></div>`;
  }
}
customElements.define('feature-row', FeatureRow);

class FeaturePanel extends HTMLElement {
  constructor() {
    super();
    this.attachShadow({ mode: 'open' }).innerHTML = `
      <style>
        :host { display: flex; flex-direction: column; width: 206px; height: 527px; margin-top: -1px; flex: none; box-sizing: border-box; border: 1px solid #ccc; background: #fff; font-family: Roboto, sans-serif; color: #333; position: relative; z-index: 1; }
        .head { height: 32px; display: flex; align-items: center; padding: 0 0 2px 3px; box-sizing: border-box; flex: none; }
        .head b { font-weight: 400; font-size: 14px; margin-left: 9px; color: #3b3b3b; width: 81px; white-space: nowrap; }
        .filter { height: 30px; display: flex; align-items: center; flex: none; padding-left: 7px; }
        .input { width: 158px; height: 30px; margin-left: 11px; border: 1px solid #ccc; border-radius: 3px; box-sizing: border-box; padding-left: 5px; font: italic 13px/28px Roboto, sans-serif; letter-spacing: .1px; color: #888; }
        .body { height: 280px; display: flex; flex: none; border-bottom: 1px solid #ccc; box-sizing: border-box; width: 199px; }
        .list { width: 182px; overflow: hidden; padding-top: 4px; box-sizing: border-box; flex: none; }
        .bar { width: 17px; background: #f1f1f1; flex: none; display: flex; flex-direction: column; align-items: center; box-sizing: border-box; padding-top: 7px; }
        .up { border: 4px solid transparent; border-bottom: 5px solid #333; border-top: 0; width: 0; }
        .thumb { width: 13px; height: 101px; background: #bdbdbd; margin-top: 135px; margin-left: -1px; }
        .down { border: 4px solid transparent; border-top: 5px solid #333; border-bottom: 0; width: 0; margin-top: 17px; }
        .parts { height: 26px; display: flex; align-items: center; font-size: 13px; color: #444; letter-spacing: .2px; }
      </style>
      <div class="head">
        <x-icon name="rollback" size="18"></x-icon>
        <b>Features (24)</b>
        <x-icon name="folderAdd" size="20" style="margin-left:23px"></x-icon>
        <x-icon name="stopwatch" size="20" style="margin-left:10px"></x-icon>
      </div>
      <div class="filter">
        <x-icon name="funnel" size="20"></x-icon>
        <div class="input">Filter by name or type</div>
      </div>
      <div class="body">
        <div class="list"><slot></slot></div>
        <div class="bar"><span class="up"></span><span class="thumb"></span><span class="down"></span></div>
      </div>
      <div class="parts" style="padding-left:3px">
        <svg width="14" height="14" viewBox="0 0 14 14"><path d="M2 4.500L7 9.500l5-5" fill="none" stroke="#666" stroke-width="1.800"/></svg>
        <span style="margin-left:5px">Parts (1)</span>
      </div>
      <div class="parts" style="padding-left:22px">
        <x-icon name="part" size="18"></x-icon>
        <span style="margin-left:4px">Part 1</span>
      </div>`;
  }
}
customElements.define('feature-panel', FeaturePanel);

class CheckRow extends HTMLElement {
  constructor() {
    super();
    const on = this.hasAttribute('checked');
    this.attachShadow({ mode: 'open' }).innerHTML = `
      <style>
        :host { display: flex; align-items: center; height: 27.300px; padding-left: 4px; font: 13px Roboto, sans-serif; color: #888; letter-spacing: .1px; }
        i { width: 12px; height: 12px; box-sizing: border-box; border-radius: 2px; border: 1px solid ${on ? '#1650ad' : '#d6d6d6'}; background: ${on ? '#1650ad' : '#fff'}; display: flex; margin-right: 4px; flex: none; }
        svg { display: ${on ? 'block' : 'none'}; }
      </style>
      <i><svg width="10" height="10" viewBox="0 0 10 10"><path d="M2 5l2.200 2.200L8 3" fill="none" stroke="#fff" stroke-width="1.700"/></svg></i><slot></slot>`;
  }
}
customElements.define('check-row', CheckRow);

class SketchDialog extends HTMLElement {
  constructor() {
    super();
    this.attachShadow({ mode: 'open' }).innerHTML = `
      <style>
        :host { display: block; position: absolute; left: 39px; top: 2px; width: 220px; height: 220px; background: #fff; box-shadow: 0 3px 9px rgba(0,0,0,.28); font-family: Roboto, sans-serif; z-index: 2; }
        .head { height: 29px; display: flex; align-items: center; border-bottom: 1px solid #d6d6d6; box-sizing: border-box; padding-left: 6px; font-size: 13px; font-weight: 500; color: #333; }
        .ok { margin-left: auto; width: 28px; height: 28px; background: #009600; display: flex; align-items: center; justify-content: center; }
        .no { width: 28px; display: flex; justify-content: center; }
        .plane { display: flex; padding: 5px 0 0 3px; }
        .field { width: 188px; height: 44px; box-sizing: border-box; border: 1px solid #d8d8d8; border-radius: 2px; padding: 5px 5px 0 5px; position: relative; }
        .lab { font-size: 9.500px; color: #666; letter-spacing: .2px; }
        .val { font-size: 13px; color: #444; margin-top: 7px; margin-left: 1px; letter-spacing: .1px; }
        .clr { position: absolute; right: 11px; bottom: 7px; }
        .checks { margin-top: 6px; }
        .foot { display: flex; align-items: center; margin-top: 2px; padding-left: 145px; }
        .final { width: 49px; height: 22px; box-sizing: border-box; border: 1px solid #ccc; border-radius: 2px; font-size: 12.500px; color: #444; display: flex; align-items: center; justify-content: center; }
      </style>
      <div class="head">Sketch 9
        <span class="ok"><x-icon name="check" size="20"></x-icon></span>
        <span class="no"><x-icon name="cross" size="18"></x-icon></span>
      </div>
      <div class="plane">
        <div class="field">
          <div class="lab">Sketch plane</div>
          <div class="val">Face of Extrude 5</div>
          <svg class="clr" width="8" height="8"><path d="M.5 .5l7 7M7.500 .5l-7 7" stroke="#ccc" stroke-width="1"/></svg>
        </div>
        <x-icon name="clock" size="20" style="margin:2px 0 0 3px"></x-icon>
      </div>
      <div class="checks"><slot></slot></div>
      <div class="foot">
        <span class="final">Final</span>
        <x-icon name="helpGray" size="16" style="margin:4px 0 0 7px"></x-icon>
      </div>`;
  }
}
customElements.define('sketch-dialog', SketchDialog);

class ViewCanvas extends HTMLElement {
  constructor() {
    super();
    // viewBox in page coordinates, so the free canvas reads like the reference
    this.attachShadow({ mode: 'open' }).innerHTML = `
      <style>
        :host { display: block; position: relative; flex: 1; background: #fff; overflow: hidden; min-width: 0; }
        svg.scene { position: absolute; left: 0; top: 0; display: block; }
        .toggle { position: absolute; left: -1px; top: 238px; width: 33px; height: 34px; box-sizing: border-box; background: #fff; border: 1px solid #ccc; border-left: 0; display: flex; align-items: center; justify-content: center; z-index: 3; }
        .side { position: absolute; right: 0; top: 188px; width: 32px; border: 1px solid #ccc; border-right: 0; background: #fff; }
        .side span { height: 33px; box-sizing: border-box; display: flex; align-items: center; justify-content: center; }
        .side span + span { border-top: 1px solid #ccc; }
        .measure { position: absolute; right: 8px; top: 501px; display: flex; gap: 13px; }
      </style>
      <svg class="scene" width="1120" height="526" viewBox="246 164 1120 526">
        <defs>
          <linearGradient id="body" x1="0" y1="0" x2="0" y2="1">
            <stop offset="0" stop-color="#79a2bd"/><stop offset=".3" stop-color="#aad6ef"/><stop offset=".6" stop-color="#6f97b1"/><stop offset="1" stop-color="#3f5f78"/>
          </linearGradient>
          <linearGradient id="stub" x1="0" y1="0" x2="0" y2="1">
            <stop offset="0" stop-color="#6f9ab5"/><stop offset=".4" stop-color="#8db5cc"/><stop offset="1" stop-color="#5e8aa5"/>
          </linearGradient>
        </defs>
        <rect x="556" y="177" width="501" height="501" fill="#f3f7fb" stroke="#b9d0ea" stroke-width="2"/>
        <path d="M806 176v503M555 427h503" stroke="#8aabd3" stroke-width="2" fill="none"/>
        <text transform="translate(1056 194) scale(-1 1)" font-family="'DejaVu Sans Mono', monospace" font-size="16.500" fill="#2f55b8" stroke="#2f55b8" stroke-width=".4">Front</text>
        <rect x="681" y="395" width="41" height="21" fill="url(#stub)" stroke="#222" stroke-width="1.200"/>
        <rect x="722" y="384.500" width="168" height="42.500" fill="url(#body)" stroke="#1c2a33" stroke-width="1.300"/>
        <rect x="890" y="395" width="20.500" height="21" fill="url(#stub)" stroke="#222" stroke-width="1.200"/>
        <rect x="910.500" y="395" width="21.500" height="21" fill="#80a9c2" stroke="#222" stroke-width="1.200"/>
        <path d="M806 385v42" stroke="#6f8ea8" stroke-width="1.200"/>
        <circle cx="806" cy="405" r="1.800" fill="#5c6f80"/>
        <circle cx="890" cy="395" r="2" fill="#555"/><circle cx="890" cy="416" r="2" fill="#555"/>
        <circle cx="890" cy="405.500" r="2" fill="#fff" stroke="#555" stroke-width=".8"/>
        <circle cx="691" cy="405" r="21.300" fill="rgba(232,234,236,.72)" stroke="#1c1c1c" stroke-width="1.800"/>
        <text transform="translate(710 409) scale(-1 1)" font-family="Roboto, sans-serif" font-size="14" letter-spacing="2" fill="#777">Ø10</text>
        <path d="M691 386v38" stroke="#111" stroke-width="1"/>
        <path d="M691 387l-3.500 10h7zM691 423l-3.500-10h7z" fill="#111"/>
        <rect x="687.500" y="395" width="7" height="5" fill="#111"/>
        <circle cx="691" cy="405.500" r="2.500" fill="#111"/>
        <circle cx="701.500" cy="405.500" r="2.800" fill="#fff" stroke="#222" stroke-width="1"/>
        <circle cx="806" cy="427" r="4.700" fill="#111"/><circle cx="806" cy="427" r="3" fill="#fff"/><circle cx="806" cy="427" r="1.500" fill="#111"/>
        <path d="M1199 162v528" stroke="#c5e4f7" stroke-width="2"/>
        <g fill="#e2e8ee">
          <path d="M1276 178l8 10h-16zM1276 328l8-10h-16zM1201 253l10-8v16zM1351 253l-10-8v16z"/>
          <path d="M1222 212l1-10c9-8 19-14 31-17l1 6c-8 3-16 7-22 13l5 7z"/>
          <path d="M1330 212l-1-10c-9-8-19-14-31-17l-1 6c8 3 16 7 22 13l-5 7z"/>
          <path d="M1254 225h44l7 7v44l-7 7h-44l-7-7v-44z"/>
        </g>
        <rect x="1254" y="231" width="44" height="45" rx="11" fill="#fff"/>
        <text x="1276" y="257" text-anchor="middle" font-family="Roboto, sans-serif" font-size="12" fill="#555">Back</text>
        <path d="M1306.500 225v58.500" stroke="#2a2ad0" stroke-width="1.300"/>
        <path d="M1247 283.500h60" stroke="#e3242b" stroke-width="1.300"/>
        <text x="1306" y="220" text-anchor="middle" font-family="Roboto, sans-serif" font-size="13" font-weight="500" fill="#2a2ad0">Z</text>
        <text x="1237" y="288" text-anchor="middle" font-family="Roboto, sans-serif" font-size="13" font-weight="500" fill="#e3242b">X</text>
        <path d="M1321 310.500l8 3v10l-8 4-8-4v-10z" fill="#8a8a8a" stroke="#555" stroke-width=".8"/>
        <path d="M1313 313.500l8-3 8 3-8 3z" fill="#ececec"/><path d="M1321 316.500l8-3v10l-8 4z" fill="#d8d8d8"/>
        <path d="M1338 317h9l-4.500 5z" fill="#333"/>
      </svg>
      <div class="toggle"><x-icon name="list" size="22"></x-icon></div>
      <slot></slot>
      <div class="side">
        <span><x-icon name="appearance" size="22"></x-icon></span>
        <span><x-icon name="tableBlue" size="22"></x-icon></span>
        <span><x-icon name="tableCfg" size="22"></x-icon></span>
        <span><x-icon name="tableFx" size="22"></x-icon></span>
      </div>
      <div class="measure">
        <x-icon name="tape" size="22"></x-icon>
        <x-icon name="protractor" size="22"></x-icon>
        <x-icon name="scale" size="22"></x-icon>
      </div>`;
  }
}
customElements.define('view-canvas', ViewCanvas);

class StudioTabs extends HTMLElement {
  constructor() {
    super();
    this.attachShadow({ mode: 'open' }).innerHTML = `
      <style>
        :host { display: flex; height: 30px; flex: none; background: #cfcfcf; box-sizing: border-box; border-bottom: 2px solid #b9b9b9; font: 14px Roboto, sans-serif; }
        .tool { width: 40px; background: #fafafa; display: flex; align-items: center; justify-content: center; flex: none; height: 30px; }
        .add { width: 34px; margin-right: 5px; display: flex; align-items: center; justify-content: center; flex: none; }
        .tab { width: 200px; height: 28px; display: flex; align-items: center; padding-left: 10px; box-sizing: border-box; flex: none; border-radius: 0 0 4px 4px; }
        .tab span { margin-left: 1px; }
        .on { background: #fff; color: #333; border-bottom: 2px solid #1650ad; padding-top: 2px; }
        .off { background: #e6e6e6; color: #777; margin-left: 2px; }
      </style>
      <div class="tool"><x-icon name="inspect" size="20"></x-icon></div>
      <div class="add"><x-icon name="plus" size="18"></x-icon></div>
      <div class="tab on"><x-icon name="studioTab" size="22"></x-icon><span>Part Studio 1</span></div>
      <div class="tab off"><x-icon name="assemblyTab" size="22"></x-icon><span>Assembly 1</span></div>`;
  }
}
customElements.define('studio-tabs', StudioTabs);

class TaskBar extends HTMLElement {
  constructor() {
    super();
    const app = (n, s = 26) => `<span class="app"><x-icon name="${n}" size="${s}"></x-icon></span>`;
    this.attachShadow({ mode: 'open' }).innerHTML = `
      <style>
        :host { display: flex; align-items: center; height: 48px; flex: none; position: relative; background: linear-gradient(90deg, #dceaf6 0%, #dbe7f6 40%, #d8e2f5 70%, #e1ecf8 100%); font: 12px "Open Sans", sans-serif; color: #222; box-sizing: border-box; }
        .wx { display: flex; align-items: center; margin-left: 18px; width: 388px; flex: none; }
        .wx div { margin-left: 6px; line-height: 16px; margin-top: -1px; }
        .wx small { display: block; font-size: 12px; color: #444; }
        .search { width: 217px; height: 31px; margin-left: 14px; border-radius: 16px; background: #f5f8fc; box-shadow: 0 0 1px rgba(0,0,0,.4); display: flex; align-items: center; box-sizing: border-box; padding-left: 9px; color: #555; font-size: 13px; flex: none; }
        .app { width: 44.400px; height: 38px; display: flex; align-items: center; justify-content: center; flex: none; position: relative; }
        .apps { display: flex; margin-left: 2px; }
        .chrome::before { content: ""; position: absolute; left: 3px; right: 3px; top: 0; bottom: 0; background: rgba(255,255,255,.5); border-radius: 4px; }
        .chrome::after { content: ""; position: absolute; left: 15px; width: 16px; bottom: 1px; height: 3px; border-radius: 2px; background: #0a6cc8; }
        .tray { display: flex; align-items: center; margin-left: auto; }
        .time { text-align: right; line-height: 16px; width: 60px; margin-left: 6px; color: #222; }
        .badge { width: 16px; height: 16px; border-radius: 50%; background: #0f5bb5; color: #fff; font-size: 10px; text-align: center; line-height: 16px; margin: 0 20px 0 11px; }
      </style>
      <div class="wx"><x-icon name="weather" size="26"></x-icon><div>67°F<small>Mostly cloudy</small></div></div>
      <x-icon name="win" size="24" style="margin-left:-1px"></x-icon>
      <div class="search"><x-icon name="search" size="20"></x-icon><span style="margin-left:7px">Search</span>
        <x-icon name="pencilBook" size="30" style="margin-left:auto"></x-icon><x-icon name="pencilBlue" size="28" style="margin-right:6px"></x-icon></div>
      <div class="apps">
        ${app('taskview', 24)}${app('meet')}${app('explorer')}${app('edge')}${app('store')}${app('mail')}
        <span class="app chrome"><x-icon name="chrome" size="26" style="position:relative"></x-icon><x-icon name="avatar" size="17" style="position:absolute;left:22px;top:3px"></x-icon></span>
      </div>
      <div class="tray">
        <x-icon name="chevUp" size="16"></x-icon>
        <x-icon name="cloud" size="20" style="margin-left:15px"></x-icon>
        <x-icon name="wifi" size="18" style="margin-left:13px"></x-icon>
        <x-icon name="volume" size="17" style="margin-left:6px"></x-icon>
        <x-icon name="battery" size="18" style="margin-left:6px"></x-icon>
        <div class="time">8:27 AM<br>5/6/2024</div>
        <span class="badge">1</span>
      </div>`;
  }
}
customElements.define('task-bar', TaskBar);

class AppShell extends HTMLElement {
  constructor() {
    super();
    this.attachShadow({ mode: 'open' }).innerHTML = `
      <style>
        :host { display: flex; flex-direction: column; width: 1366px; height: 768px; overflow: hidden; }
        .work { display: flex; height: 526px; flex: none; }
      </style>
      <tab-strip>
        <chrome-tab icon="dashboard" pad="9">Dashboard</chrome-tab>
        <chrome-tab icon="towel">Paper Towel Holder - Instructables</chrome-tab>
        <chrome-tab icon="drive">Home - Google Drive</chrome-tab>
        <chrome-tab icon="docs">Instructables (Final) - Google Docs</chrome-tab>
        <chrome-tab icon="hex" active nosep>Instructables (Final) | Part Studio 1</chrome-tab>
      </tab-strip>
      <address-bar></address-bar>
      <doc-bar></doc-bar>
      <tool-bar></tool-bar>
      <div class="work">
        <left-rail></left-rail>
        <feature-panel>
          <feature-row kind="extrude">Extrude 5</feature-row>
          <feature-row kind="sketch" state="dim">Sketch 6</feature-row>
          <feature-row kind="extrude">Extrude 6</feature-row>
          <feature-row kind="sketch" state="dim">Sketch 7</feature-row>
          <feature-row kind="extrude">Extrude 7</feature-row>
          <feature-row kind="sketch" state="err">Sketch 8</feature-row>
          <feature-row kind="extrude">Extrude 8</feature-row>
          <feature-row kind="sketch" state="sel">Sketch 9</feature-row>
          <feature-row kind="extrude" state="off">Extrude 9</feature-row>
          <feature-row kind="sketch" state="off">Sketch 10</feature-row>
          <feature-row kind="extrude" state="off">Extrude 10</feature-row>
        </feature-panel>
        <view-canvas>
          <sketch-dialog>
            <check-row>Disable imprinting</check-row>
            <check-row>Show constraints</check-row>
            <check-row>Show expressions</check-row>
            <check-row checked>Show overdefined</check-row>
          </sketch-dialog>
        </view-canvas>
      </div>
      <studio-tabs></studio-tabs>
      <task-bar></task-bar>`;
  }
}
customElements.define('app-shell', AppShell);
</script>
</body>
</html>
